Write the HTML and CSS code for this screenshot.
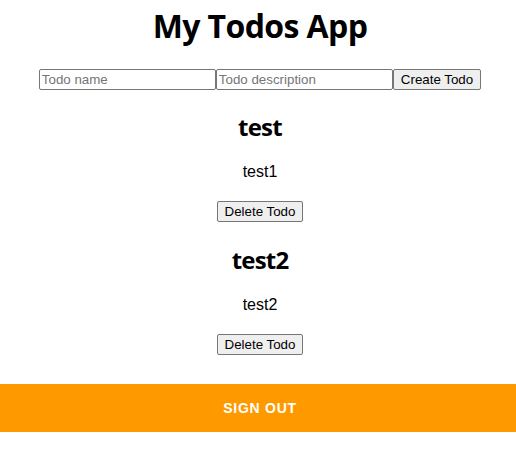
FILE: index.html
```html
<!DOCTYPE html>
<html>
<head>
<meta charset="utf-8">
<link rel="stylesheet" href="styles.css">
</head>
<body>
<div class="app">
  <div class="content">
    <h1 class="title">My Todos App</h1>
    <div class="form-row">
      <input class="field" type="text" placeholder="Todo name">
      <input class="field" type="text" placeholder="Todo description">
      <button class="btn btn-create" type="button">Create Todo</button>
    </div>
    <div class="todo">
      <h2 class="todo-name">test</h2>
      <p class="todo-desc">test1</p>
      <button class="btn" type="button">Delete Todo</button>
    </div>
    <div class="todo">
      <h2 class="todo-name">test2</h2>
      <p class="todo-desc">test2</p>
      <button class="btn" type="button">Delete Todo</button>
    </div>
  </div>
  <div class="signout-wrap">
    <button class="signout" type="button">Sign Out</button>
  </div>
</div>
</body>
</html>
```
FILE: styles.css
```css
html, body {
  margin: 0;
  padding: 0;
  background: #ffffff;
}
body {
  font-family: "Open Sans", "Noto Sans", sans-serif;
  color: #000;
}
.app {
  display: flex;
  flex-direction: column;
}
.content {
  display: flex;
  flex-direction: column;
  align-items: center;
  padding-left: 4px;
}
.title {
  font-size: 32px;
  font-weight: 700;
  letter-spacing: -0.6px;
  margin: 4px 0 0 0;
  line-height: 44px;
}
.form-row {
  display: flex;
  align-items: center;
  margin-top: 21px;
}
.field {
  font-family: "Liberation Sans", Arial, sans-serif;
  font-size: 13.33px;
  width: 177px;
  height: 21px;
  box-sizing: border-box;
  border: 1px solid #767676;
  border-radius: 2px;
  padding: 1px 2px;
  margin: 0;
  color: #000;
}
.field::placeholder {
  color: #757575;
}
.btn {
  font-family: "Liberation Sans", Arial, sans-serif;
  font-size: 13.33px;
  height: 21px;
  box-sizing: border-box;
  padding: 1px 6.5px;
  border: 1px solid #767676;
  border-radius: 2px;
  background: #efefef;
  color: #000;
  margin: 0;
}
.btn-create {
  padding: 1px 7px;
}
.todo {
  display: flex;
  flex-direction: column;
  align-items: center;
}
.todo + .todo {
  margin-top: 1px;
}
.todo-name {
  font-size: 24px;
  font-weight: 700;
  letter-spacing: -0.8px;
  margin: 21px 0 0 0;
  line-height: 32px;
}
.todo-desc {
  font-family: "Liberation Sans", Arial, sans-serif;
  font-size: 16px;
  margin: 20px 0 20px 0;
  line-height: 18px;
}
.signout-wrap {
  margin-top: 29px;
}
.signout {
  display: block;
  width: 100%;
  height: 48px;
  border: none;
  background: #ff9900;
  color: #ffffff;
  font-family: "Liberation Sans", Arial, sans-serif;
  font-size: 14px;
  font-weight: 700;
  letter-spacing: 0.75px;
  text-transform: uppercase;
  padding: 0 0 0 4px;
  margin: 0;
}
```
